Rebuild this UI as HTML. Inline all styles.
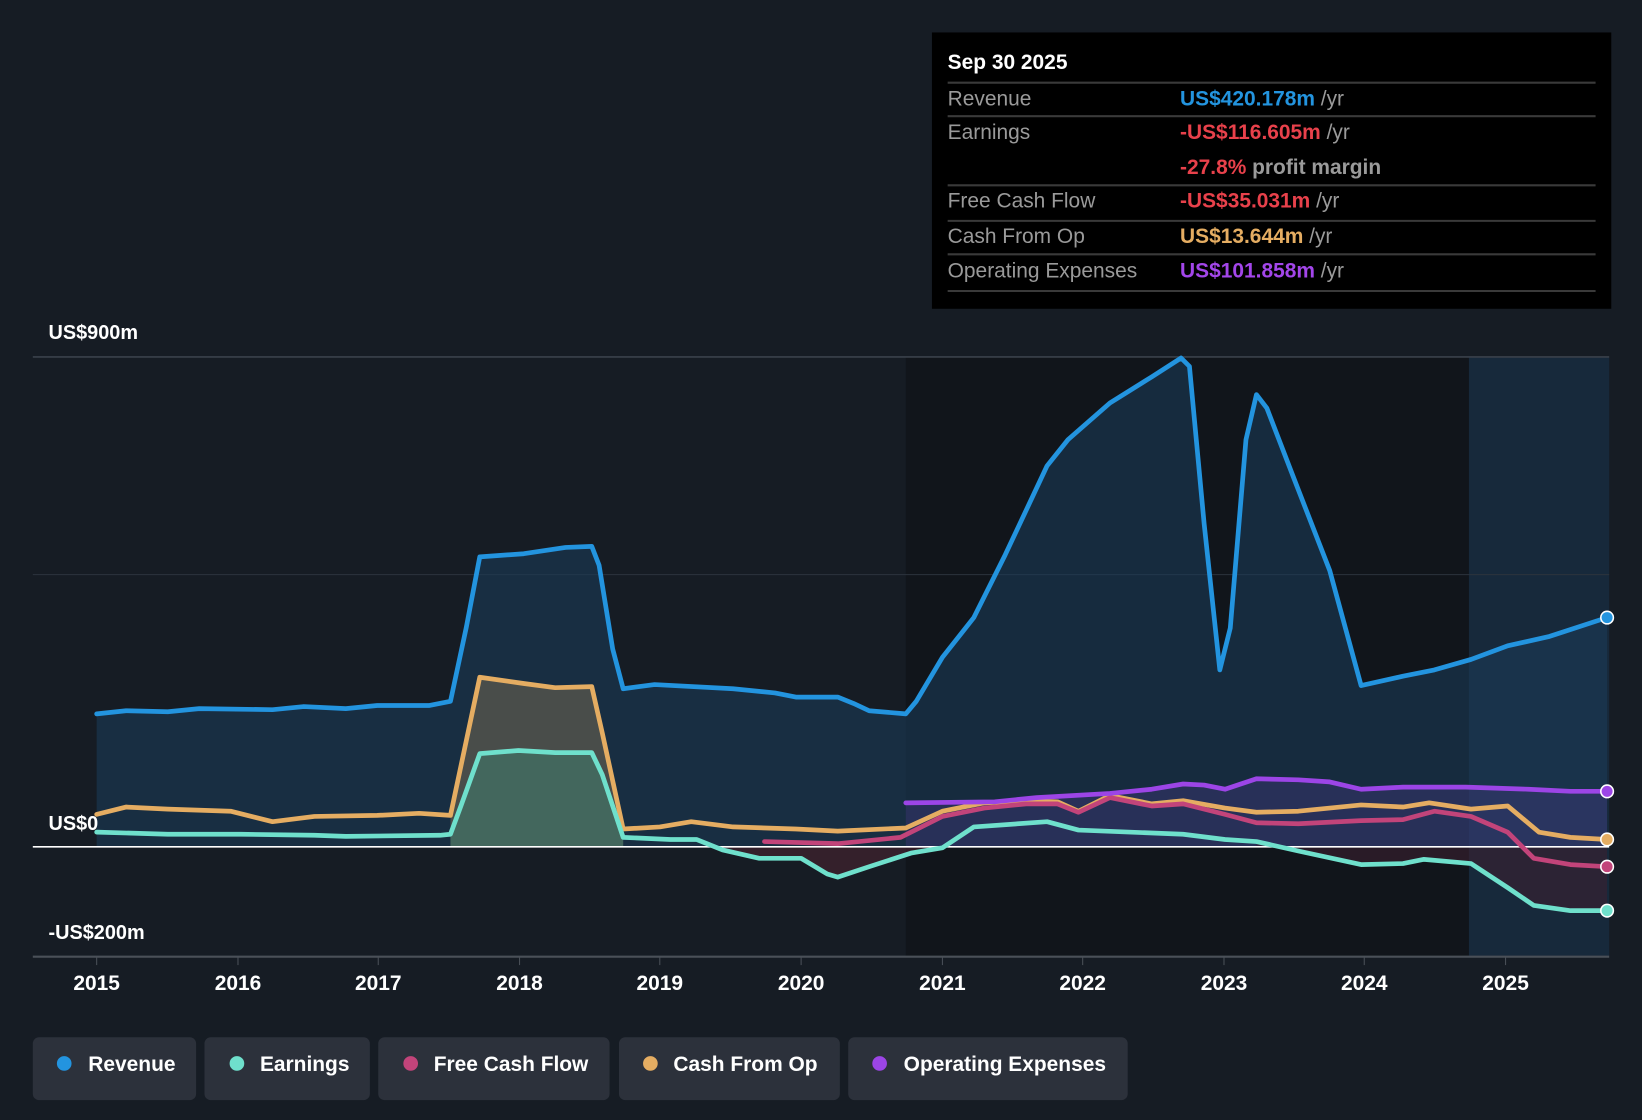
<!DOCTYPE html>
<html><head><meta charset="utf-8"><style>
html,body{margin:0;padding:0;background:#161c24;}
svg{display:block}
text{font-family:"Liberation Sans",sans-serif}
</style></head><body>
<svg width="1642" height="1120" viewBox="0 0 1568 1070" xmlns="http://www.w3.org/2000/svg">
<rect width="1568" height="1070" fill="#161c24"/>
<rect x="865" y="341" width="538" height="572" fill="#11151b"/>
<rect x="1403" y="341" width="134" height="572" fill="#17293b"/>
<line x1="31" y1="341" x2="1537" y2="341" stroke="#3a414b" stroke-width="1.5"/>
<line x1="31" y1="549" x2="1537" y2="549" stroke="#2c333d" stroke-width="1"/>
<path d="M92,682 L120,679 L160,680 L190,677 L260,678 L290,675 L330,677 L360,674 L410,674 L430,670 L445,600 L458,532 L500,529 L540,523 L565,522 L572,540 L585,620 L595,658 L625,654 L700,658 L740,662 L760,666 L800,666 L815,672 L830,679 L865,682 L875,670 L900,628 L930,590 L960,530 L1000,445 L1020,420 L1060,385 L1100,360 L1128,342 L1136,350 L1150,500 L1165,640 L1175,600 L1190,420 L1200,377 L1210,390 L1235,455 L1270,545 L1300,655 L1340,646 L1370,640 L1405,630 L1440,617 L1480,608 L1535,590 L1535,809 L92,809 Z" fill="#1b3a56" fill-opacity="0.6"/>
<path d="M430,779 L458,647 L500,653 L530,657 L565,656 L575,700 L595,792 L595,809 L430,809Z" fill="#6b6250" fill-opacity="0.6"/>
<path d="M430,797 L440,770 L458,720 L495,717 L530,719 L565,719 L575,740 L595,800 L595,809 L430,809Z" fill="#3f7a6a" fill-opacity="0.6"/>
<path d="M865,767 L950,766 L990,762 L1060,758 L1100,754 L1130,749 L1150,750 L1170,754 L1200,744 L1240,745 L1270,747 L1300,754 L1340,752 L1400,752 L1460,754 L1500,756 L1535,756 L1535,809 L865,809Z" fill="#4a3a8a" fill-opacity="0.35"/>
<path d="M690,812 L725,820 L765,820 L790,835 L800,838 L830,828 L870,815 L900,810 L900,809 L690,809Z" fill="#4a2330" fill-opacity="0.6"/>
<path d="M1200,804 L1240,813 L1300,826 L1340,825 L1360,821 L1405,825 L1440,848 L1465,865 L1500,870 L1535,870 L1535,809 L1200,809Z" fill="#3a2030" fill-opacity="0.6"/>
<line x1="31" y1="809" x2="1537" y2="809" stroke="#ffffff" stroke-width="1.5"/>
<g fill="none" stroke-width="4.5" stroke-linejoin="round" stroke-linecap="round">
<path stroke="#2394df" d="M92,682 L120,679 L160,680 L190,677 L260,678 L290,675 L330,677 L360,674 L410,674 L430,670 L445,600 L458,532 L500,529 L540,523 L565,522 L572,540 L585,620 L595,658 L625,654 L700,658 L740,662 L760,666 L800,666 L815,672 L830,679 L865,682 L875,670 L900,628 L930,590 L960,530 L1000,445 L1020,420 L1060,385 L1100,360 L1128,342 L1136,350 L1150,500 L1165,640 L1175,600 L1190,420 L1200,377 L1210,390 L1235,455 L1270,545 L1300,655 L1340,646 L1370,640 L1405,630 L1440,617 L1480,608 L1535,590"/>
<path stroke="#e5ad62" d="M92,778 L120,771 L160,773 L220,775 L260,785 L300,780 L360,779 L400,777 L430,779 L458,647 L500,653 L530,657 L565,656 L575,700 L595,792 L630,790 L660,785 L700,790 L760,792 L800,794 L865,791 L900,775 L940,767 L980,765 L1010,766 L1030,775 L1060,760 L1100,768 L1130,765 L1170,772 L1200,776 L1240,775 L1300,769 L1340,771 L1365,767 L1405,773 L1440,770 L1470,795 L1500,800 L1535,802"/>
<path stroke="#c2447a" d="M730,804 L800,806 L860,800 L900,780 L940,772 L980,768 L1010,768 L1030,776 L1060,762 L1100,770 L1130,768 L1170,778 L1200,786 L1240,787 L1300,784 L1340,783 L1370,775 L1405,780 L1440,795 L1465,820 L1500,826 L1535,828"/>
<path stroke="#6fe0cc" d="M92,795 L160,797 L230,797 L300,798 L330,799 L420,798 L430,797 L440,770 L458,720 L495,717 L530,719 L565,719 L575,740 L595,800 L640,802 L665,802 L690,812 L725,820 L765,820 L790,835 L800,838 L830,828 L870,815 L900,810 L930,790 L1000,785 L1030,793 L1130,797 L1170,802 L1200,804 L1240,813 L1300,826 L1340,825 L1360,821 L1405,825 L1440,848 L1465,865 L1500,870 L1535,870"/>
<path stroke="#9c45e6" d="M865,767 L950,766 L990,762 L1060,758 L1100,754 L1130,749 L1150,750 L1170,754 L1200,744 L1240,745 L1270,747 L1300,754 L1340,752 L1400,752 L1460,754 L1500,756 L1535,756"/>
</g>
<g stroke="#fff" stroke-width="1.5">
<circle cx="1535" cy="590" r="6" fill="#2394df"/>
<circle cx="1535" cy="756" r="6" fill="#9c45e6"/>
<circle cx="1535" cy="802" r="6" fill="#e5ad62"/>
<circle cx="1535" cy="828" r="6" fill="#c2447a"/>
<circle cx="1535" cy="870" r="6" fill="#6fe0cc"/>
</g>
<line x1="31" y1="914" x2="1537" y2="914" stroke="#4a5058" stroke-width="2"/>
<g stroke="#4a5058" stroke-width="1">
<line x1="92" y1="914" x2="92" y2="922"/><line x1="227" y1="914" x2="227" y2="922"/><line x1="361" y1="914" x2="361" y2="922"/><line x1="496" y1="914" x2="496" y2="922"/><line x1="630" y1="914" x2="630" y2="922"/><line x1="765" y1="914" x2="765" y2="922"/><line x1="900" y1="914" x2="900" y2="922"/><line x1="1034" y1="914" x2="1034" y2="922"/><line x1="1169" y1="914" x2="1169" y2="922"/><line x1="1303" y1="914" x2="1303" y2="922"/><line x1="1438" y1="914" x2="1438" y2="922"/>
</g>
<g fill="#fff" font-size="20" font-weight="bold" text-anchor="middle">
<text x="92" y="946">2015</text><text x="227" y="946">2016</text><text x="361" y="946">2017</text><text x="496" y="946">2018</text><text x="630" y="946">2019</text><text x="765" y="946">2020</text><text x="900" y="946">2021</text><text x="1034" y="946">2022</text><text x="1169" y="946">2023</text><text x="1303" y="946">2024</text><text x="1438" y="946">2025</text>
</g>
<g fill="#fff" font-size="19" font-weight="bold">
<text x="46" y="324">US$900m</text>
<text x="46" y="793">US$0</text>
<text x="46" y="897">-US$200m</text>
</g>
<rect x="890" y="31" width="649" height="264" fill="#000"/>
<text x="905" y="66" fill="#fff" font-size="20" font-weight="bold">Sep 30 2025</text>
<g stroke="#3a3a3a" stroke-width="2">
<line x1="905" y1="79" x2="1524" y2="79"/><line x1="905" y1="111" x2="1524" y2="111"/><line x1="905" y1="177" x2="1524" y2="177"/><line x1="905" y1="211" x2="1524" y2="211"/><line x1="905" y1="243" x2="1524" y2="243"/><line x1="905" y1="278" x2="1524" y2="278"/>
</g>
<g font-size="20" fill="#9a9a9a">
<text x="905" y="101">Revenue</text>
<text x="905" y="133">Earnings</text>
<text x="905" y="198">Free Cash Flow</text>
<text x="905" y="232">Cash From Op</text>
<text x="905" y="265">Operating Expenses</text>
</g>
<g font-size="20" font-weight="bold">
<text x="1127" y="101"><tspan fill="#2394df">US$420.178m</tspan><tspan fill="#9a9a9a" font-weight="normal"> /yr</tspan></text>
<text x="1127" y="133"><tspan fill="#e8414b">-US$116.605m</tspan><tspan fill="#9a9a9a" font-weight="normal"> /yr</tspan></text>
<text x="1127" y="166"><tspan fill="#e8414b">-27.8%</tspan><tspan fill="#9a9a9a"> profit margin</tspan></text>
<text x="1127" y="198"><tspan fill="#e8414b">-US$35.031m</tspan><tspan fill="#9a9a9a" font-weight="normal"> /yr</tspan></text>
<text x="1127" y="232"><tspan fill="#e5ad62">US$13.644m</tspan><tspan fill="#9a9a9a" font-weight="normal"> /yr</tspan></text>
<text x="1127" y="265"><tspan fill="#a346ea">US$101.858m</tspan><tspan fill="#9a9a9a" font-weight="normal"> /yr</tspan></text>
</g>
<g fill="#2c313b">
<rect x="31" y="991" width="156" height="60" rx="6"/>
<rect x="195" y="991" width="158" height="60" rx="6"/>
<rect x="361" y="991" width="221" height="60" rx="6"/>
<rect x="591" y="991" width="211" height="60" rx="6"/>
<rect x="810" y="991" width="267" height="60" rx="6"/>
</g>
<circle cx="61" cy="1016" r="7" fill="#2394df"/>
<circle cx="226" cy="1016" r="7" fill="#6fe0cc"/>
<circle cx="392" cy="1016" r="7" fill="#c2447a"/>
<circle cx="621" cy="1016" r="7" fill="#e5ad62"/>
<circle cx="840" cy="1016" r="7" fill="#9c45e6"/>
<g fill="#fff" font-size="20" font-weight="bold">
<text x="84" y="1023">Revenue</text>
<text x="248" y="1023">Earnings</text>
<text x="414" y="1023">Free Cash Flow</text>
<text x="643" y="1023">Cash From Op</text>
<text x="863" y="1023">Operating Expenses</text>
</g>
</svg>
</body></html>
